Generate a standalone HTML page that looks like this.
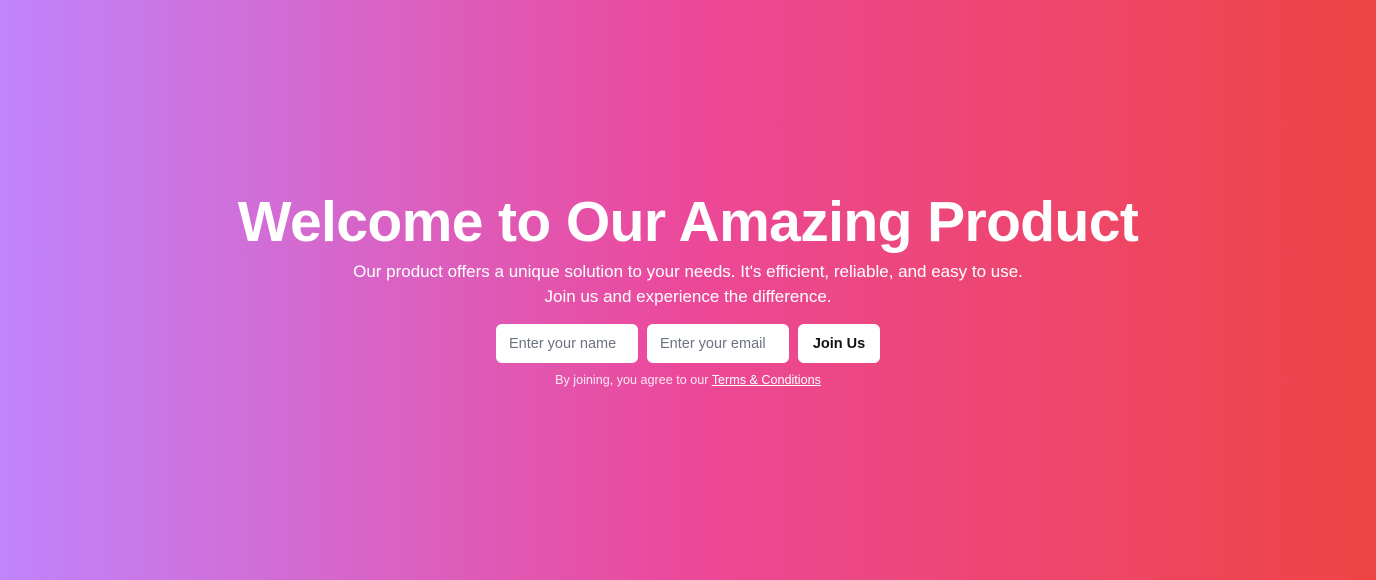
<!DOCTYPE html>
<html><head><style>
html,body{margin:0;width:1376px;height:580px;overflow:hidden}
body{background:linear-gradient(to right,#c084fc,#ec4899 50%,#ef4444);font-family:"Liberation Sans",sans-serif;color:#fff;position:relative}
h1{position:absolute;top:187px;left:0;width:1376px;text-align:center;margin:0;font-size:57px;line-height:70px;letter-spacing:-0.6px;font-weight:bold}
p.sub{position:absolute;top:259px;left:0;width:1376px;text-align:center;margin:0;font-size:17px;line-height:25px}
.f{position:absolute;top:324px;height:39px;background:#fff;border-radius:6px;font-size:14.5px;line-height:40px;box-sizing:border-box}
.in{color:#6b7280;padding-left:13px;width:142px}
.btn{left:798px;width:82px;text-align:center;color:#111;font-weight:bold}
.small{position:absolute;top:372px;left:0;width:1376px;text-align:center;font-size:12.6px;line-height:16px;color:#fde7f3}
.small u{color:#fff}
</style></head><body>
<h1>Welcome to Our Amazing Product</h1>
<p class="sub">Our product offers a unique solution to your needs. It's efficient, reliable, and easy to use.<br>Join us and experience the difference.</p>
<div class="f in" style="left:496px">Enter your name</div>
<div class="f in" style="left:647px">Enter your email</div>
<div class="f btn">Join Us</div>
<div class="small">By joining, you agree to our <u>Terms &amp; Conditions</u></div>
</body></html>
